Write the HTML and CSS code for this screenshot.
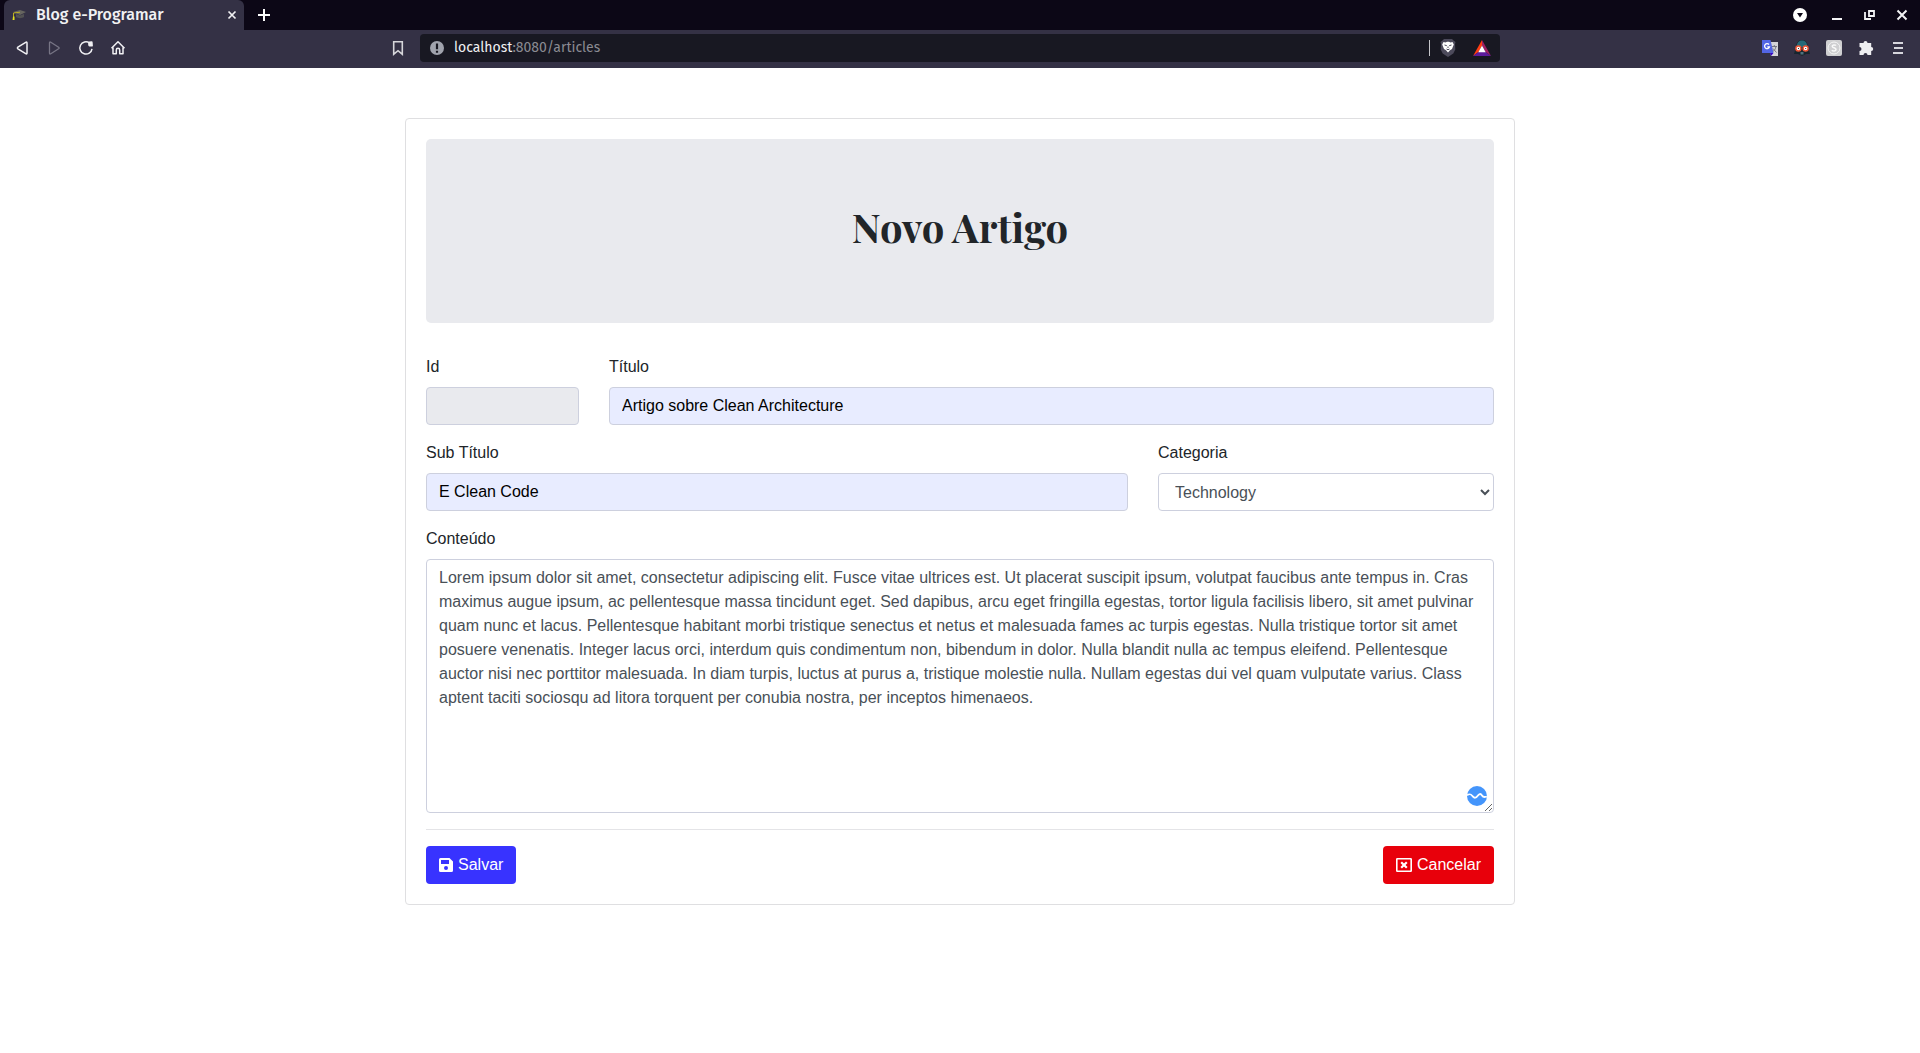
FILE: index.html
```html
<!DOCTYPE html>
<html lang="pt-BR">
<head>
<meta charset="utf-8">
<meta name="viewport" content="width=device-width, initial-scale=1">
<title>Blog e-Programar</title>
<link rel="stylesheet" href="styles.css">
</head>
<body>
<header class="browser">
  <div class="tabstrip">
    <div class="tab">
      <svg class="tab-icon" width="14" height="14" viewBox="0 0 14 14" aria-hidden="true"><path d="M1 4 8 2l6 2-6 3z" fill="#66655f"/><path d="M4 6v3c2 1.500 6 1.500 8 0V6L8 7.600z" fill="#525253"/><path d="M8 4.200 1.500 5V9" fill="none" stroke="#b9ad22"/><path d="M1 8.500h1.500v3.500H.6z" fill="#e2e21c"/></svg>
      <span class="tab-title">Blog e-Programar</span>
      <button class="icon-btn" aria-label="Fechar aba"><svg width="10" height="10" viewBox="0 0 10 10"><path d="m1.500 1.500 7 7m0-7-7 7" stroke="#f1f1f3" stroke-width="1.7"/></svg></button>
    </div>
    <button class="icon-btn new-tab" aria-label="Nova aba"><svg width="12" height="12" viewBox="0 0 12 12"><path d="M6 0v12M0 6h12" stroke="#fff" stroke-width="2"/></svg></button>
    <div class="window-buttons">
      <button class="icon-btn tab-search" aria-label="Pesquisar abas"><svg width="14" height="14" viewBox="0 0 14 14"><circle cx="7" cy="7" r="7" fill="#fff"/><path d="M4 5h6L7 9.500z" fill="#0c0716"/></svg></button>
      <button class="icon-btn" aria-label="Minimizar"><svg width="12" height="12" viewBox="0 0 12 12"><path d="M0 10h10" stroke="#f3f3f5" stroke-width="2"/></svg></button>
      <button class="icon-btn" aria-label="Restaurar"><svg width="12" height="12" viewBox="0 0 12 12"><path d="M5 2h5v5H5zM1 3v7h6" fill="none" stroke="#f3f3f5" stroke-width="1.800"/></svg></button>
      <button class="icon-btn" aria-label="Fechar"><svg width="12" height="12" viewBox="0 0 12 12"><path d="m1.500 1.500 9 9m0-9-9 9" stroke="#f3f3f5" stroke-width="2"/></svg></button>
    </div>
  </div>
  <div class="toolbar">
    <nav class="nav">
      <button class="icon-btn" aria-label="Voltar"><svg width="16" height="16" viewBox="0 0 16 16"><path d="M13 3v10q0 1.500-1.300.7L3.900 8.800q-1-.8 0-1.600l7.800-4.900Q13 1.500 13 3z" fill="none" stroke="#f0f0f3" stroke-width="1.500"/></svg></button>
      <button class="icon-btn" aria-label="Avançar"><svg width="16" height="16" viewBox="0 0 16 16"><path d="M3.500 3v10q0 1.500 1.300.7l7.800-4.900q1-.8 0-1.600L4.800 2.300Q3.500 1.500 3.500 3z" fill="none" stroke="#777585" stroke-width="1.300"/></svg></button>
      <button class="icon-btn" aria-label="Recarregar"><svg width="16" height="16" viewBox="0 0 16 16"><path d="M11.500 3A6.100 6.100 0 1 0 14 8.800" fill="none" stroke="#f0f0f3" stroke-width="1.500"/><path d="M10.300 2.200q-.6 2.500.2 3.800 1.300.9 3.800.4.700-.2.600-1L14.600 2q-.1-.7-.8-.7l-2.700.1q-.7.1-.8.800z" fill="#f0f0f3"/></svg></button>
      <button class="icon-btn" aria-label="Início"><svg width="16" height="16" viewBox="0 0 16 16"><path d="m1.500 8.300 6.500-6.600 6.500 6.600M3 7.500v6.300h3.300V10a1.700 1.700 0 0 1 3.400 0v3.800H13V7.500" fill="none" stroke="#f0f0f3" stroke-width="1.500" stroke-linejoin="round"/></svg></button>
      <button class="icon-btn bookmark" aria-label="Adicionar favorito"><svg width="16" height="16" viewBox="0 0 16 16"><path d="M3.700 1.700h8.600v12.500L8 10.700l-4.300 3.500z" fill="none" stroke="#d6d6da" stroke-width="1.600"/></svg></button>
    </nav>
    <div class="address">
      <svg width="14" height="14" viewBox="0 0 14 14" aria-hidden="true"><circle cx="7" cy="7" r="7" fill="#a0a3ad"/><path d="M7 2.500v5.700M7 9.700v2" stroke="#181822" stroke-width="2.200"/></svg>
      <span class="url"><span class="host">localhost</span>:8080/articles</span>
      <span class="divider"></span>
      <button class="icon-btn" aria-label="Brave Shields"><svg width="16" height="18" viewBox="0 0 16 18"><path d="M4 0h8l1.500 1.500L15.500 3l-.5 2 .3 5.500-2 4L8 18l-5.300-3.500-2-4L1 5 .500 3l2-1.500z" fill="#4c4a5b"/><path d="m3.500 3 2 .5L7 2.800h2l1.500.7 2-.5 1.300 2.500-1 2.500-.8 2-2 1.300L8 13.500l-2-2.200L4 10l-.8-2-1-2.500z" fill="#fff"/><path d="m4.500 6 2.300.7M11.500 6l-2.300.7M6.500 10l1.500.8 1.500-.8M8 7.500V9" fill="none" stroke="#4c4a5b"/></svg></button>
      <button class="icon-btn" aria-label="Brave Rewards"><svg width="18" height="16" viewBox="0 0 18 16"><path d="M9 0v5.500L5.500 12 0 16z" fill="#ff3d12"/><path d="M9 0v5.500l3.500 6.500L18 16z" fill="#9e1f63"/><path d="m0 16 5.500-4h7l5.500 4z" fill="#5c1b9b"/><path d="m9 5.500-3.700 6.700h7.400z" fill="#fff"/></svg></button>
    </div>
    <div class="extensions">
      <button class="icon-btn" aria-label="Tradutor"><svg width="16" height="16" viewBox="0 0 16 16"><path d="M6 2h10v14H9z" fill="#d4d4d8"/><path d="M0 0h8.500l3 13H0z" fill="#5366e4"/><path d="m8 13 3.500 0L9 16z" fill="#3300c4"/><path d="M7 4.500a2.500 2.500 0 1 0 .5 2.300H5.300" fill="none" stroke="#fff" stroke-width="1.300"/><path d="M10 6.500h5M12.300 5v1.500M14 6.500c-.5 3-2 4-3 5M11 8.500l3.500 4" fill="none" stroke="#777883"/></svg></button>
      <button class="icon-btn" aria-label="Modo escuro"><svg width="16" height="16" viewBox="0 0 16 16"><path d="M8 0C4 0 2.500 3 2.200 6L0 14h4l4 2 4-2h4l-2.200-8C13.500 3 12 0 8 0z" fill="#17262e"/><path d="M8 .5C4.500.5 2.800 3 2.600 7h10.800C13.200 3 11.500.5 8 .5z" fill="#256a78"/><circle cx="4.400" cy="8.500" r="2.500" fill="#fff" stroke="#ee5635" stroke-width="1.400"/><circle cx="11.600" cy="8.500" r="2.500" fill="#fff" stroke="#ee5635" stroke-width="1.400"/><path d="M4 8.500h1M11.200 8.500h1" stroke="#333"/><path d="M6.500 12h3v2.500h-3z" fill="#51717c"/></svg></button>
      <button class="icon-btn" aria-label="Extensão S"><svg width="16" height="16" viewBox="0 0 16 16"><rect width="16" height="16" rx="2" fill="#cfcfd1"/><circle cx="8" cy="8" r="6" fill="none" stroke="#f5f5f5"/><path d="M10 5.600C9 4.500 6.200 4.700 6.200 6.200 6.200 8 10 7.500 10 9.600c0 1.700-3 1.900-4.200.6" fill="none" stroke="#fafafa" stroke-width="1.500"/></svg></button>
      <button class="icon-btn" aria-label="Extensões"><svg width="16" height="16" viewBox="0 0 16 16"><path d="M1.500 3h4a2 2 0 1 1 4 0h3.700v4a2 2 0 1 1 0 4v4H9.500a2 2 0 0 0-4 0h-4v-4a2 2 0 0 0 0-4z" fill="#eeeef1"/></svg></button>
      <button class="icon-btn" aria-label="Menu"><svg width="16" height="16" viewBox="0 0 16 16"><path d="M3 3h10M4 8h9M3 13h10" stroke="#d6d6dc" stroke-width="1.800"/></svg></button>
    </div>
  </div>
</header>

<main class="container">
  <form class="card">
    <div class="hero"><h1>Novo Artigo</h1></div>
    <div class="row">
      <div class="field col-2"><label for="id">Id</label><input class="control" id="id" type="text" disabled></div>
      <div class="field col-10"><label for="titulo">Título</label><input class="control filled" id="titulo" type="text" value="Artigo sobre Clean Architecture"></div>
    </div>
    <div class="row">
      <div class="field col-8"><label for="subtitulo">Sub Título</label><input class="control filled" id="subtitulo" type="text" value="E Clean Code"></div>
      <div class="field col-4"><label for="categoria">Categoria</label><select class="control" id="categoria"><option>Technology</option></select></div>
    </div>
    <div class="field">
      <label for="conteudo">Conteúdo</label>
      <div class="editor">
        <textarea class="control" id="conteudo" rows="10" spellcheck="false">Lorem ipsum dolor sit amet, consectetur adipiscing elit. Fusce vitae ultrices est. Ut placerat suscipit ipsum, volutpat faucibus ante tempus in. Cras maximus augue ipsum, ac pellentesque massa tincidunt eget. Sed dapibus, arcu eget fringilla egestas, tortor ligula facilisis libero, sit amet pulvinar quam nunc et lacus. Pellentesque habitant morbi tristique senectus et netus et malesuada fames ac turpis egestas. Nulla tristique tortor sit amet posuere venenatis. Integer lacus orci, interdum quis condimentum non, bibendum in dolor. Nulla blandit nulla ac tempus eleifend. Pellentesque auctor nisi nec porttitor malesuada. In diam turpis, luctus at purus a, tristique molestie nulla. Nullam egestas dui vel quam vulputate varius. Class aptent taciti sociosqu ad litora torquent per conubia nostra, per inceptos himenaeos.</textarea>
        <svg class="badge" width="20" height="20" viewBox="0 0 20 20" aria-hidden="true"><circle cx="10" cy="10" r="10" fill="#4495fb"/><path d="M0 9.200C3.500 6.800 4.500 9 6 10.700S9 12 10.500 10s3-3 4.500-.5 3 1.500 4.900 1" fill="none" stroke="#fff" stroke-width="1.800"/></svg>
      </div>
    </div>
    <hr class="rule">
    <div class="actions">
      <button class="btn save" type="button"><svg width="14" height="14" viewBox="0 0 14 14" aria-hidden="true"><path fill-rule="evenodd" d="M1.500 0H10.500L14 3.500V12.500A1.500 1.500 0 0 1 12.500 14H1.500A1.500 1.500 0 0 1 0 12.500V1.500A1.500 1.500 0 0 1 1.500 0zM2 2v4h8V2zM7 8a2 2 0 1 0 0 4 2 2 0 0 0 0-4z" fill="#fff"/></svg>Salvar</button>
      <button class="btn cancel" type="button"><svg width="16" height="14" viewBox="0 0 16 14" aria-hidden="true"><rect x=".8" y=".8" width="14.400" height="12.400" rx=".5" fill="none" stroke="#fff" stroke-width="1.600"/><path d="m5.200 4.200 5.600 5.600m0-5.600-5.600 5.600" stroke="#fff" stroke-width="2.200"/></svg>Cancelar</button>
    </div>
  </form>
</main>
</body>
</html>
```
FILE: styles.css
```css
* { box-sizing: border-box; }

body {
  margin: 0;
  background: #fff;
  color: #212529;
  font: 16px/24px "Liberation Sans", Arial, sans-serif;
}

button, input, select, textarea { font: inherit; }
svg { display: block; flex: none; }

/* Browser frame */
.browser { font-family: "Fira Sans", "Noto Sans", sans-serif; }

.tabstrip {
  display: flex;
  align-items: center;
  height: 30px;
  padding: 0 10px 0 4px;
  background: #0c0716;
}

.tab {
  display: flex;
  align-items: center;
  gap: 10px;
  width: 240px;
  height: 30px;
  padding: 0 4px 0 8px;
  border-radius: 6px 6px 0 0;
  background: #343145;
}

.tab-title {
  flex: 1;
  color: #f1f1f3;
  font-size: 16px;
  font-weight: 500;
  white-space: nowrap;
}

.icon-btn {
  display: flex;
  align-items: center;
  justify-content: center;
  flex: none;
  width: 16px;
  height: 20px;
  padding: 0;
  border: 0;
  background: none;
}

.new-tab { margin-left: 12px; }

.window-buttons {
  display: flex;
  gap: 16px;
  margin-left: auto;
}

.tab-search { margin-right: 6px; }

.toolbar {
  display: grid;
  grid-template-columns: 1fr minmax(0, 1080px) 1fr;
  align-items: center;
  height: 38px;
  padding-bottom: 2px;
  background: #343145;
}

.nav, .extensions {
  display: flex;
  align-items: center;
  gap: 16px;
  padding: 0 14px;
}

.bookmark { margin-left: auto; }
.extensions { justify-content: flex-end; }

.address {
  display: flex;
  align-items: center;
  gap: 18px;
  height: 28px;
  padding: 0 10px;
  border-radius: 4px;
  background: #181822;
}

.url {
  flex: 1;
  margin-left: -8px;
  color: #8b8b92;
  font-size: 14px;
}

.host { color: #f1f1f3; }

.divider {
  width: 1px;
  height: 16px;
  margin-right: -8px;
  background: #c5c5ca;
}

/* Article form */
.container {
  max-width: 1110px;
  margin: 50px auto;
}

.card {
  padding: 20px;
  border: 1px solid #dfdfe1;
  border-radius: 4px;
}

.hero {
  margin-bottom: 32px;
  padding: 64px 32px;
  border-radius: 5px;
  background: #e9eaee;
  text-align: center;
}

.hero h1 {
  margin: 0 0 8px;
  font: bold 40px/48px "Playfair Display", "Liberation Serif", serif;
}

.row {
  display: grid;
  grid-template-columns: repeat(12, minmax(0, 1fr));
  column-gap: 30px;
}

.col-2 { grid-column: span 2; }
.col-4 { grid-column: span 4; }
.col-8 { grid-column: span 8; }
.col-10 { grid-column: span 10; }

.field { margin-bottom: 16px; }

.field label {
  display: block;
  margin-bottom: 8px;
}

.control {
  display: block;
  width: 100%;
  height: 38px;
  padding: 6px 12px;
  border: 1px solid #cdd0de;
  border-radius: 4px;
  background: #fff;
  color: #495057;
}

.control:disabled { background: #e9eaee; }

.filled {
  background: #e8ecff;
  color: #000;
}

textarea.control {
  height: auto;
  resize: vertical;
}

.editor { position: relative; }

.badge {
  position: absolute;
  right: 7px;
  bottom: 7px;
}

.rule {
  margin: 16px 0;
  border: 0;
  border-top: 1px solid #e4e4e7;
}

.actions {
  display: flex;
  justify-content: space-between;
}

.btn {
  display: flex;
  align-items: center;
  gap: 5px;
  padding: 7px 13px;
  border: 0;
  border-radius: 4px;
  color: #fff;
}

.save { background: #3833ff; }
.cancel { background: #e8000b; }
```
